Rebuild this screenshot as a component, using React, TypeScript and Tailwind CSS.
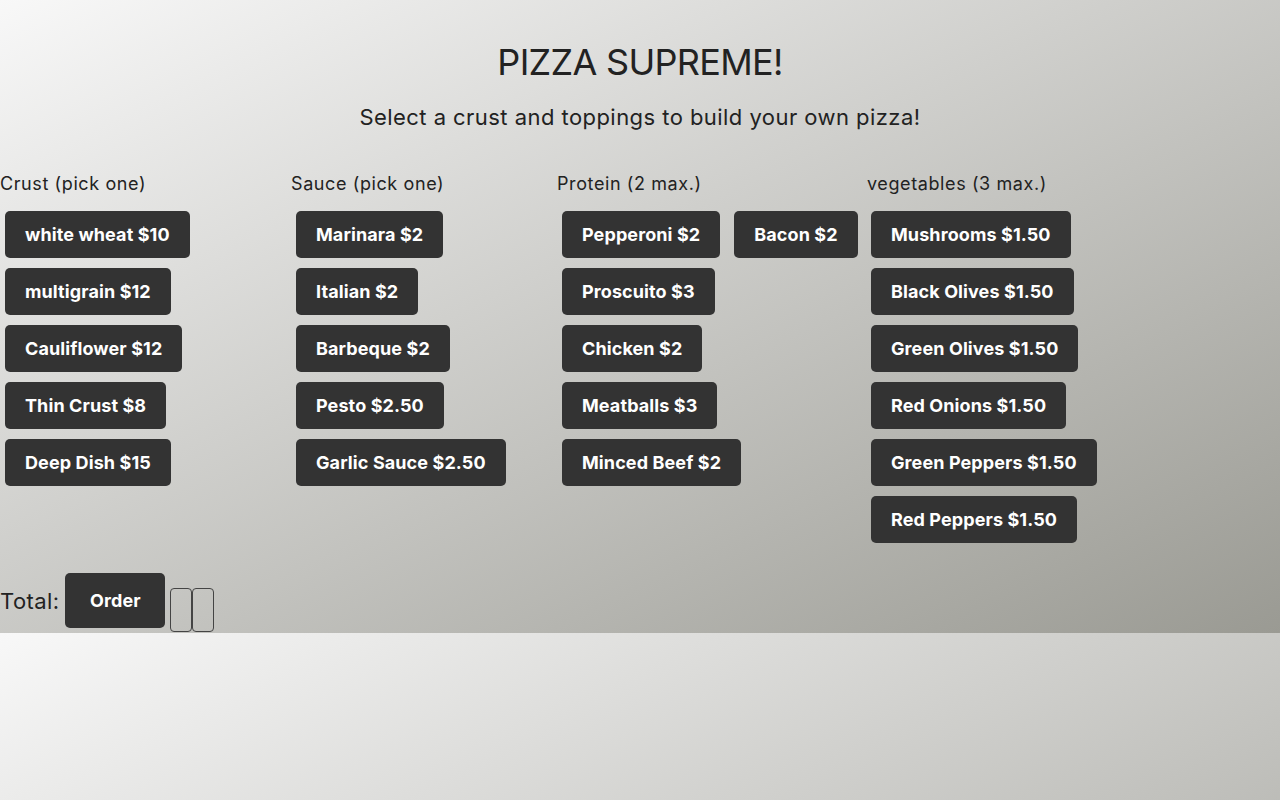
import React from 'react';

type Item = {name: string; price: string};

const crusts: Item[] = [
  {name: 'white wheat', price: '$10'},
  {name: 'multigrain', price: '$12'},
  {name: 'Cauliflower', price: '$12'},
  {name: 'Thin Crust', price: '$8'},
  {name: 'Deep Dish', price: '$15'},
];

const sauces: Item[] = [
  {name: 'Marinara', price: '$2'},
  {name: 'Italian', price: '$2'},
  {name: 'Barbeque', price: '$2'},
  {name: 'Pesto', price: '$2.50'},
  {name: 'Garlic Sauce', price: '$2.50'},
];

const proteins: Item[] = [
  {name: 'Proscuito', price: '$3'},
  {name: 'Chicken', price: '$2'},
  {name: 'Meatballs', price: '$3'},
  {name: 'Minced Beef', price: '$2'},
];

const vegetables: Item[] = [
  {name: 'Mushrooms', price: '$1.50'},
  {name: 'Black Olives', price: '$1.50'},
  {name: 'Green Olives', price: '$1.50'},
  {name: 'Red Onions', price: '$1.50'},
  {name: 'Green Peppers', price: '$1.50'},
  {name: 'Red Peppers', price: '$1.50'},
];

const OptionButton = ({item, extra = ''}: {item: Item; extra?: string}) => (
  <button
    className={`m-[5px] h-[47px] px-5 rounded-[5px] bg-[#333333] text-white text-[18px] font-bold leading-none tracking-[0.1px] whitespace-nowrap ${extra}`}
  >
    {item.name} {item.price}
  </button>
);

const Column = ({
  label,
  width,
  children,
}: {
  label: string;
  width: string;
  children: React.ReactNode;
}) => (
  <div className={`flex flex-col items-start ${width}`}>
    <p className="text-[18px] leading-[22px] tracking-[0.6px] text-[#222]">{label}</p>
    <div className="flex flex-col items-start mt-[11px]">{children}</div>
  </div>
);

const App: React.FC = () => {
  return (
    <div className="h-[800px] w-full bg-[linear-gradient(to_bottom_right,#f8f8f8,#9a9a93)] bg-[length:100%_633px] bg-repeat font-['Inter',sans-serif] text-[#222]">
      <h1 className="pt-[40px] text-center text-[36px] leading-[44px] tracking-[-0.7px]">PIZZA SUPREME!</h1>
      <p className="mt-[19px] text-center text-[22px] leading-[28px] tracking-[0.45px]">
        Select a crust and toppings to build your own pizza!
      </p>
      <div className="flex mt-[42px]">
        <Column label="Crust (pick one)" width="w-[291px]">
          {crusts.map(c => (
            <OptionButton key={c.name} item={c} />
          ))}
        </Column>
        <Column label="Sauce (pick one)" width="w-[266px]">
          {sauces.map(s => (
            <OptionButton key={s.name} item={s} />
          ))}
        </Column>
        <Column label="Protein (2 max.)" width="w-[310px]">
          <div className="flex">
            <OptionButton item={{name: 'Pepperoni', price: '$2'}} />
            <OptionButton item={{name: 'Bacon', price: '$2'}} extra="ml-[9px]" />
          </div>
          {proteins.map(p => (
            <OptionButton key={p.name} item={p} />
          ))}
        </Column>
        <Column label="vegetables (3 max.)" width="w-[310px]">
          {vegetables.map(v => (
            <OptionButton key={v.name} item={v} extra="ml-[4px]" />
          ))}
        </Column>
      </div>
      <div className="flex items-start mt-[25px]">
        <span className="mt-[14px] text-[22px] leading-[28px] tracking-[0.4px]">Total:</span>
        <button className="ml-[6px] h-[55px] w-[100px] rounded-[5px] bg-[#333333] text-white text-[18px] font-bold tracking-[0.1px]">
          Order
        </button>
        <span className="ml-[5px] mt-[15px] h-[44px] w-[22px] rounded-[4px] border border-[#444]" />
        <span className="mt-[15px] h-[44px] w-[22px] rounded-[4px] border border-[#444]" />
      </div>
    </div>
  );
};

export default App;
